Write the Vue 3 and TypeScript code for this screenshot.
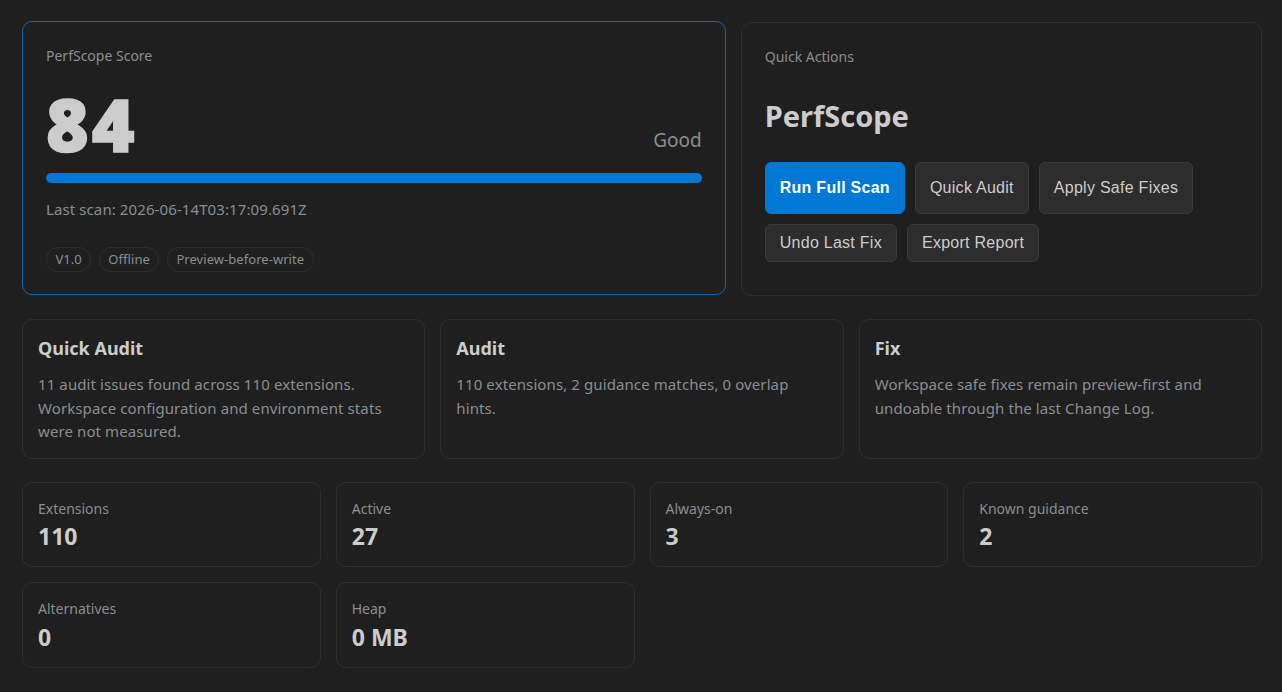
<script setup lang="ts">
interface InfoCard {
  title: string;
  text: string;
}

interface Metric {
  label: string;
  value: string;
}

const tags = ['V1.0', 'Offline', 'Preview-before-write'];

const infoCards: InfoCard[] = [
  {
    title: 'Quick Audit',
    text: '11 audit issues found across 110 extensions. Workspace configuration and environment stats were not measured.',
  },
  {
    title: 'Audit',
    text: '110 extensions, 2 guidance matches, 0 overlap hints.',
  },
  {
    title: 'Fix',
    text: 'Workspace safe fixes remain preview-first and undoable through the last Change Log.',
  },
];

const metrics: Metric[] = [
  { label: 'Extensions', value: '110' },
  { label: 'Active', value: '27' },
  { label: 'Always-on', value: '3' },
  { label: 'Known guidance', value: '2' },
  { label: 'Alternatives', value: '0' },
  { label: 'Heap', value: '0 MB' },
];
</script>

<template>
  <div class="dashboard">
    <section class="hero">
      <div class="card score-card">
        <div class="eyebrow">PerfScope Score</div>
        <div class="score-row">
          <span class="score">84</span>
          <span class="grade">Good</span>
        </div>
        <div class="bar"><div class="bar__fill" /></div>
        <div class="last-scan">Last scan: 2026-06-14T03:17:09.691Z</div>
        <div class="tags">
          <span v-for="tag in tags" :key="tag" class="tag">{{ tag }}</span>
        </div>
      </div>

      <div class="card actions-card">
        <div class="eyebrow">Quick Actions</div>
        <h1 class="actions-title">PerfScope</h1>
        <div class="actions">
          <button class="btn btn--primary">Run Full Scan</button>
          <button class="btn btn--tall">Quick Audit</button>
          <button class="btn btn--tall">Apply Safe Fixes</button>
          <button class="btn">Undo Last Fix</button>
          <button class="btn">Export Report</button>
        </div>
      </div>
    </section>

    <section class="info-grid">
      <div v-for="card in infoCards" :key="card.title" class="info-card">
        <h2 class="info-card__title">{{ card.title }}</h2>
        <p class="info-card__text">{{ card.text }}</p>
      </div>
    </section>

    <section class="metric-grid">
      <div v-for="metric in metrics" :key="metric.label" class="metric">
        <div class="metric__label">{{ metric.label }}</div>
        <div class="metric__value">{{ metric.value }}</div>
      </div>
    </section>
  </div>
</template>

<style>
html,
body {
  background: #1f1f1f;
}
</style>

<style scoped>
.dashboard {
  box-sizing: border-box;
  width: 1282px;
  height: 692px;
  padding: 22px 20px 0 22px;
  background: #1f1f1f;
  color: #cccccc;
  font-family: "Noto Sans", "Open Sans", sans-serif;
  overflow: hidden;
}
.hero {
  display: grid;
  grid-template-columns: 1.35fr 1fr;
  gap: 15px;
}
.card {
  box-sizing: border-box;
  height: 274px;
  padding: 24px 23px;
  border: 1px solid #2f2f2f;
  border-radius: 10px;
  background: #1f1f1f;
}
.score-card {
  border-color: #0b69b0;
  transform: translateY(-1px);
}
.eyebrow {
  height: 20px;
  font-size: 14px;
  line-height: 20px;
  color: #8a8e93;
}
.score-row {
  display: flex;
  align-items: flex-end;
  justify-content: space-between;
  height: 86px;
  margin-top: 14px;
}
.score {
  font-size: 73px;
  font-weight: 900;
  line-height: 84px;
  letter-spacing: 3px;
  -webkit-text-stroke: 1.5px #cccccc;
  color: #cccccc;
}
.grade {
  font-size: 19px;
  line-height: 26px;
  margin-bottom: 13px;
  color: #8a8e93;
}
.bar {
  height: 10px;
  margin-top: 7px;
  border-radius: 5px;
  background: #2d2d2d;
  overflow: hidden;
}
.bar__fill {
  width: 100%;
  height: 100%;
  background: #0078d4;
}
.last-scan {
  margin-top: 16px;
  font-size: 15px;
  line-height: 20px;
  letter-spacing: 0.1px;
  color: #8a8e93;
}
.tags {
  display: flex;
  gap: 7.5px;
  margin-top: 28px;
}
.tag {
  padding: 0 8.5px;
  height: 23px;
  border: 1px solid #2f2f2f;
  border-radius: 12px;
  font-size: 13px;
  line-height: 23px;
  letter-spacing: 0.05px;
  color: #8a8e93;
}
.actions-title {
  margin: 29px 0 0;
  font-size: 29px;
  font-weight: 700;
  line-height: 40px;
  color: #cccccc;
}
.actions {
  display: flex;
  flex-wrap: wrap;
  gap: 10px;
  margin-top: 26px;
}
.btn {
  box-sizing: border-box;
  height: 38px;
  padding: 0 14px;
  border: 1px solid #3a3a3a;
  border-radius: 6px;
  background: #2d2d2d;
  color: #cccccc;
  font-family: "Liberation Sans", Arial, sans-serif;
  font-size: 16px;
  letter-spacing: 0.27px;
}
.btn--tall {
  height: 52px;
}
.btn--primary {
  height: 52px;
  border-color: #0078d4;
  background: #0078d4;
  color: #ffffff;
  font-weight: 700;
}
.info-grid {
  display: grid;
  grid-template-columns: repeat(3, 1fr);
  gap: 15px;
  margin-top: 23px;
}
.info-card {
  box-sizing: border-box;
  height: 140px;
  padding: 15px;
  border: 1px solid #2f2f2f;
  border-radius: 10px;
}
.info-card__title {
  margin: 0;
  font-size: 18px;
  font-weight: 700;
  line-height: 26px;
  color: #cccccc;
}
.info-card__text {
  margin: 12px 0 0;
  font-size: 15px;
  line-height: 23.5px;
  letter-spacing: 0.1px;
  color: #8a8e93;
}
.metric-grid {
  display: grid;
  grid-template-columns: repeat(4, 1fr);
  gap: 15px;
  margin-top: 22.6px;
}
.metric {
  box-sizing: border-box;
  height: 85.5px;
  padding: 16px 15px;
  border: 1px solid #2f2f2f;
  border-radius: 10px;
}
.metric__label {
  font-size: 14px;
  line-height: 20px;
  color: #8a8e93;
}
.metric__value {
  margin-top: 2.5px;
  font-size: 23px;
  font-weight: 700;
  line-height: 30px;
  color: #cccccc;
}
</style>
